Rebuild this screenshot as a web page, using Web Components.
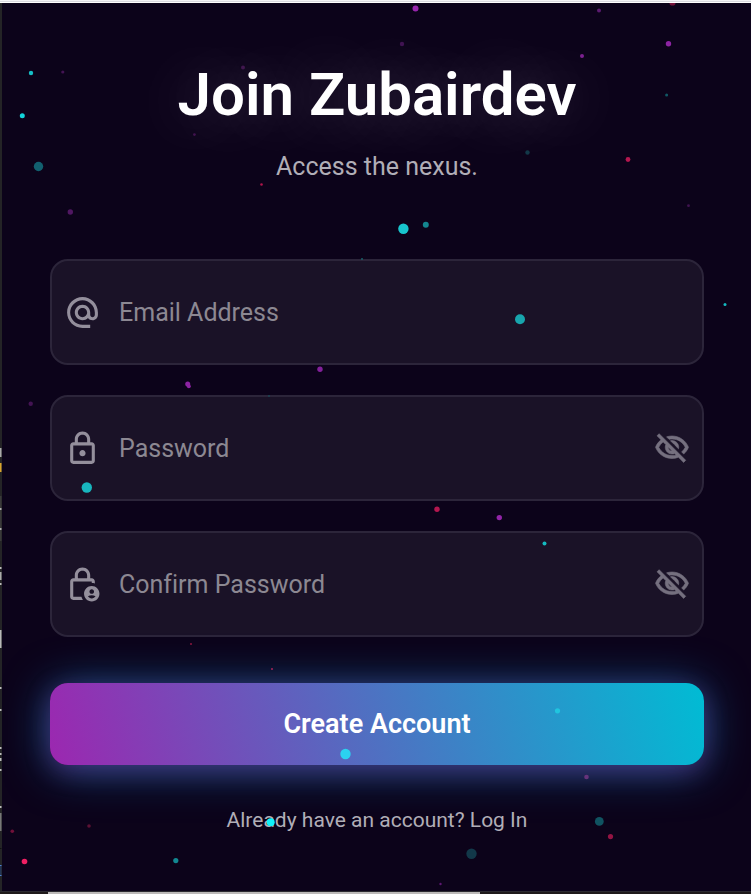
<!DOCTYPE html>
<html lang="en">
<head>
<meta charset="utf-8">
<meta name="viewport" content="width=device-width, initial-scale=1">
<title>Join Zubairdev</title>
<style>
html, body { height: 100%; margin: 0; }
body { background: #242426; font-family: Roboto, "Liberation Sans", sans-serif; color: #fff; }
</style>
</head>
<body>
<app-window>
  <signup-form>
    <neon-field label="Email Address" type="email" icon="at"></neon-field>
    <neon-field label="Password" type="password" icon="lock"></neon-field>
    <neon-field label="Confirm Password" type="password" icon="lock-person"></neon-field>
    <neon-button slot="action">Create Account</neon-button>
  </signup-form>
</app-window>
<script>
const ICONS = {
  'at': 'M12 2C6.48 2 2 6.48 2 12s4.48 10 10 10h5v-2h-5c-4.34 0-8-3.66-8-8s3.66-8 8-8 8 3.66 8 8v1.43c0 .79-.71 1.57-1.5 1.57s-1.5-.78-1.5-1.57V12c0-2.76-2.24-5-5-5s-5 2.24-5 5 2.24 5 5 5c1.38 0 2.64-.56 3.54-1.47.65.89 1.77 1.47 2.96 1.47 1.97 0 3.5-1.6 3.5-3.57V12c0-5.52-4.48-10-10-10zm0 13c-1.66 0-3-1.34-3-3s1.34-3 3-3 3 1.34 3 3-1.34 3-3 3z',
  'lock': 'M18 8h-1V6c0-2.76-2.24-5-5-5S7 3.24 7 6v2H6c-1.1 0-2 .9-2 2v10c0 1.1.9 2 2 2h12c1.1 0 2-.9 2-2V10c0-1.1-.9-2-2-2zM9 6c0-1.66 1.34-3 3-3s3 1.34 3 3v2H9V6zm9 14H6V10h12v10zm-6-3c1.1 0 2-.9 2-2s-.9-2-2-2-2 .9-2 2 .9 2 2 2z',
  'lock-person': 'M6 20V10h12v1c.7 0 1.37.1 2 .29V10c0-1.1-.9-2-2-2h-1V6c0-2.76-2.24-5-5-5S7 3.24 7 6v2H6c-1.1 0-2 .9-2 2v10c0 1.1.9 2 2 2h6.26c-.42-.6-.75-1.28-.97-2H6zM9 6c0-1.66 1.34-3 3-3s3 1.34 3 3v2H9V6zM18 13c-2.76 0-5 2.24-5 5s2.24 5 5 5 5-2.24 5-5-2.24-5-5-5zm0 2c.83 0 1.5.67 1.5 1.5S18.83 18 18 18s-1.5-.67-1.5-1.5.67-1.5 1.5-1.5zm0 6c-1.03 0-1.94-.52-2.48-1.32.73-.42 1.57-.68 2.48-.68s1.75.26 2.48.68c-.54.8-1.45 1.32-2.48 1.32z',
  'eye-off': 'M12 6c3.79 0 7.17 2.13 8.82 5.5-.59 1.22-1.42 2.27-2.41 3.12l1.41 1.41c1.39-1.23 2.49-2.77 3.18-4.53C21.27 7.11 17 4 12 4c-1.27 0-2.49.2-3.64.57l1.65 1.65C10.66 6.09 11.32 6 12 6zm-1.07 1.14L13 9.21c.57.25 1.03.71 1.28 1.28l2.07 2.07c.08-.34.14-.7.14-1.07C16.5 9.01 14.48 7 12 7c-.37 0-.72.05-1.07.14zM2.01 3.87l2.68 2.68C3.06 7.83 1.77 9.53 1 11.5 2.73 15.89 7 19 12 19c1.52 0 2.98-.29 4.32-.82l3.42 3.42 1.41-1.41L3.42 2.45 2.01 3.87zm7.5 7.5l2.61 2.61c-.04.01-.08.02-.12.02-1.38 0-2.5-1.12-2.5-2.5 0-.05.01-.08.01-.13zm-3.4-3.4l1.75 1.75c-.23.55-.36 1.15-.36 1.78 0 2.48 2.02 4.5 4.5 4.5.63 0 1.23-.13 1.77-.36l.98.98c-.88.24-1.8.38-2.75.38-3.79 0-7.17-2.13-8.82-5.5.7-1.43 1.72-2.61 2.93-3.53z'
};
const icon = n => `<svg viewBox="0 0 24 24" aria-hidden="true"><path d="${ICONS[n]}"/></svg>`;

/* Floating particles: x, y, radius, colour */
const DOTS = [
  [415.5,8.5,3,'#9825ad'],[599,10.5,2,'#5b1b70'],[402,44,2.2,'#401352'],[668.5,43.7,2.7,'#8d24a3'],
  [582,56,2,'#7c2090'],[243,67.5,2,'#41174f'],[31,73,2.2,'#16bfc6'],[62.8,72,1.6,'#431353'],[22.3,115.8,2.5,'#12d4da'],
  [666.6,95,1.5,'#115865'],[194.4,134.6,1.4,'#41134f'],[38.5,166.5,4.7,'#12606f'],[527.5,152.5,2.2,'#123848'],[628,159.5,2.4,'#b4174f'],
  [261.5,184.5,1.3,'#b0154b'],[70.3,212,2.7,'#501762'],[688.5,205.7,1.4,'#401350'],[403.4,228.7,5.2,'#18c5cd'],[425.8,224.8,3,'#14868f'],
  [362,259,1,'#176069'],[725,304.4,1.5,'#14bac0'],[520,319.3,5,'#18a5ad'],[320,369.3,2.7,'#82209a'],[187.7,384,2.5,'#8d24a3'],[188.8,386.3,2,'#8d24a3'],
  [30.7,403.8,2.2,'#431353'],[269,396,1,'#1a4654'],[86.8,487.5,5.2,'#18b6be'],[437,509.3,2.7,'#b4174f'],[499.3,517.6,2.7,'#9225a8'],[544.5,543.5,2,'#14bac0'],
  [191,644,1,'#8b163e'],[272,669,1.1,'#9b2557'],[557.5,710.8,2.6,'#20c5df'],[345.5,754,5.2,'#2bd2f0'],[586.5,777,2.3,'#66337b'],
  [270.7,822.3,4,'#10f2fa'],[599.3,821.4,4.4,'#105361'],[610.5,836.6,2.6,'#931443'],[12.3,831.3,1.8,'#711039'],[89,826,1.8,'#5c1134'],
  [24.5,861.5,2.8,'#f01f63'],[175.8,860.6,2.6,'#128791'],[471.5,853.7,5.2,'#123849'],[440.5,884,1.2,'#5e1872']
];

/* Editor pixels that show past the window's left edge: y, height, colour */
const SLIVERS = [[448,9,'#aaa'],[463,9,'#d9a32e'],[496,45,'#3a3a3a'],[508,2,'#aaa'],[528,2,'#aaa'],[567,2,'#bbb'],[572,8,'#aaa'],[583,2,'#bbb'],
  [630,18,'#b8b8b8'],[687,2,'#bbb'],[709,2,'#bbb'],[747,2,'#bbb'],[753,2,'#bbb'],[758,3,'#bbb'],[769,2,'#bbb'],[806,2,'#bbb'],[813,18,'#777'],
  [848,1,'#111'],[865,11,'#243554'],[865,1,'#4b7fd0'],[875,1,'#4b7fd0']];

customElements.define('particle-layer', class extends HTMLElement {
  constructor() {
    super();
    this.attachShadow({ mode: 'open' }).innerHTML = `
      <style>:host { display: block; pointer-events: none; } svg { display: block; width: 100%; height: 100%; }</style>
      <svg viewBox="0 0 751 894" preserveAspectRatio="xMidYMin slice" aria-hidden="true">
        <path d="M669.5 3h6a3 2.6 0 0 1-6 0z" fill="#74123a"/>
        ${DOTS.map(([x, y, r, c]) => `<circle cx="${x}" cy="${y}" r="${r}" fill="${c}"/>`).join('')}
        ${SLIVERS.map(([y, h, c]) => `<rect x="0" y="${y}" width="1.5" height="${h}" fill="${c}"/>`).join('')}
      </svg>`;
  }
});

customElements.define('app-window', class extends HTMLElement {
  constructor() {
    super();
    this.attachShadow({ mode: 'open' }).innerHTML = `
      <style>
        :host { display: grid; grid-template-rows: 3px 1fr 3px; min-height: 100%; position: relative; overflow: hidden; }
        .top { background: linear-gradient(#f4f4f6 1px, #dadae0 1px 2px, #fff 2px); }
        main { margin-left: 2px; background: #0c031a; }
        .bottom { display: flex; border-top: 1px solid #2b2930; background: #1f1a1a; padding-left: 48px; }
        .bottom::before { content: ""; width: 61.5%; background: #bcb9b8; }
        particle-layer { position: absolute; inset: 0; }
      </style>
      <div class="top"></div><main><slot></slot></main><div class="bottom"></div>
      <particle-layer></particle-layer>`;
  }
});

customElements.define('signup-form', class extends HTMLElement {
  constructor() {
    super();
    this.attachShadow({ mode: 'open' }).innerHTML = `
      <style>
        :host { display: block; padding: 52px 47px 40px 48px; }
        header { text-align: center; }
        h1 { margin: 0; font-size: 60px; line-height: 80px; font-weight: 600; text-shadow: 0 0 60px rgba(255,255,255,.3); }
        header p { margin: 16px 0 0; font-size: 25px; line-height: 32px; color: #b1aeb7; }
        form { display: grid; gap: 46px; margin-top: 76px; }
        .fields { display: grid; gap: 30px; }
        .login { margin: 0; text-align: center; font-size: 21px; line-height: 24px; }
        .login a { color: #b1aeb7; text-decoration: none; }
      </style>
      <header><h1>Join Zubairdev</h1><p>Access the nexus.</p></header>
      <form>
        <div class="fields"><slot></slot></div>
        <slot name="action"></slot>
        <p class="login"><a href="#login">Already have an account? Log In</a></p>
      </form>`;
  }
});

customElements.define('neon-field', class extends HTMLElement {
  constructor() {
    super();
    const label = this.getAttribute('label'), type = this.getAttribute('type');
    this.attachShadow({ mode: 'open' }).innerHTML = `
      <style>
        :host { display: block; }
        .box { display: flex; align-items: center; height: 102px; padding: 0 12px; border: 2px solid #2c253a; border-radius: 18px; background: #1a1227; }
        label { display: flex; margin-right: 18px; }
        svg { display: block; width: 37px; height: 37px; fill: #948f9c; }
        input { flex: 1; min-width: 0; height: 48px; padding: 0; border: 0; outline: 0; background: none; font: 25px/32px Roboto, "Liberation Sans", sans-serif; font-variant-ligatures: none; color: #fff; }
        input::placeholder { color: #8c8892; opacity: 1; }
        button { display: flex; padding: 0; border: 0; background: none; }
        button svg { width: 36px; height: 36px; fill: #75707f; stroke: #75707f; stroke-width: .4; overflow: visible; }
      </style>
      <div class="box">
        <label for="f">${icon(this.getAttribute('icon'))}</label>
        <input id="f" type="${type}" placeholder="${label}" aria-label="${label}">
        ${type === 'password' ? `<button type="button" aria-label="Show ${label}">${icon('eye-off')}</button>` : ''}
      </div>`;
  }
});

customElements.define('neon-button', class extends HTMLElement {
  constructor() {
    super();
    this.attachShadow({ mode: 'open' }).innerHTML = `
      <style>
        :host { display: block; margin-bottom: -3px; }
        button { display: block; width: 100%; height: 82px; border: 0; border-radius: 18px; color: #fff; font: 600 27px/32px Roboto, "Liberation Sans", sans-serif;
          background: linear-gradient(74deg, #9c27b0, #00bcd4);
          box-shadow: 0 6px 24px rgba(156,39,176,.35), 0 4px 45px rgba(20,165,235,.55); }
      </style>
      <button type="submit"><slot></slot></button>`;
  }
});
</script>
</body>
</html>
